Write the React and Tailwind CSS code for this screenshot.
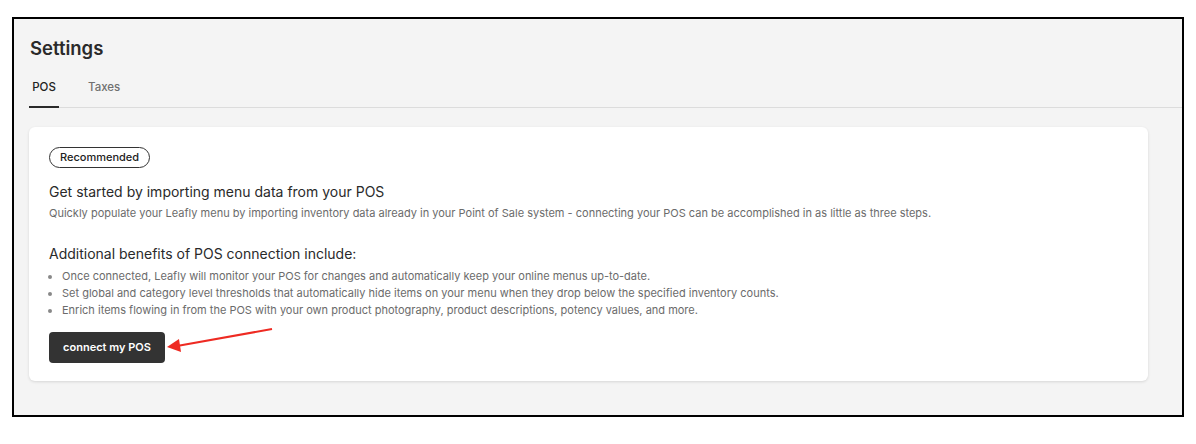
import React from "react";

export default function App() {
  const bullets = [
    "Once connected, Leafly will monitor your POS for changes and automatically keep your online menus up-to-date.",
    "Set global and category level thresholds that automatically hide items on your menu when they drop below the specified inventory counts.",
    "Enrich items flowing in from the POS with your own product photography, product descriptions, potency values, and more.",
  ];
  return (
    <div className="w-[1196px] h-[444px] bg-white pt-[17px] pl-[12px]" style={{ fontFamily: "Inter, 'Noto Sans', sans-serif" }}>
      <div className="w-[1172px] h-[400px] border-2 border-black bg-[#f4f4f4] flex flex-col">
        <h1 className="pl-[16px] pt-[17px] text-[18.5px] leading-[24px] font-semibold text-[#2a2a2a]">Settings</h1>
        <div className="ml-[15px] mt-[20px] flex border-b border-[#dcdcdc] text-[11.5px] leading-[14px]">
          <div className="w-[30px] flex justify-center pb-[12px] border-b-2 border-[#2a2a2a] -mb-px text-[#222] font-medium">POS</div>
          <div className="ml-[29px] pb-[12px] text-[#707070] font-medium">Taxes</div>
        </div>
        <div className="ml-[15px] mt-[19px] w-[1119px] h-[254px] bg-white rounded-md shadow-[0_1px_3px_rgba(0,0,0,0.12)] pl-[20px] pt-[20px] flex flex-col items-start">
          <span className="flex items-center h-[21px] px-[10px] rounded-full border border-[#333] text-[11px] font-medium text-[#222]">Recommended</span>
          <h2 className="mt-[15px] text-[14px] leading-[18px] text-[#2a2a2a]">Get started by importing menu data from your POS</h2>
          <p className="mt-[4px] text-[11px] leading-[16px] text-[#6b6b6b]">Quickly populate your Leafly menu by importing inventory data already in your Point of Sale system - connecting your POS can be accomplished in as little as three steps.</p>
          <h2 className="mt-[24px] text-[14px] leading-[18px] text-[#2a2a2a]">Additional benefits of POS connection include:</h2>
          <ul className="mt-[5px] list-disc pl-[13px] text-[11px] leading-[17px] text-[#6b6b6b] marker:text-[#888]">
            {bullets.map((b) => (
              <li key={b}>{b}</li>
            ))}
          </ul>
          <div className="mt-[13px] relative">
            <button className="h-[31px] w-[116px] rounded-[4px] bg-[#333] text-white text-[11px] font-semibold">connect my POS</button>
            <svg className="absolute left-[116px] top-[-4px]" width="112" height="26" viewBox="0 0 112 26">
              <line x1="107" y1="1" x2="12" y2="18" stroke="#ee2a22" strokeWidth="2" />
              <polygon points="2,19 14,11 16,24" fill="#ee2a22" />
            </svg>
          </div>
        </div>
      </div>
    </div>
  );
}
